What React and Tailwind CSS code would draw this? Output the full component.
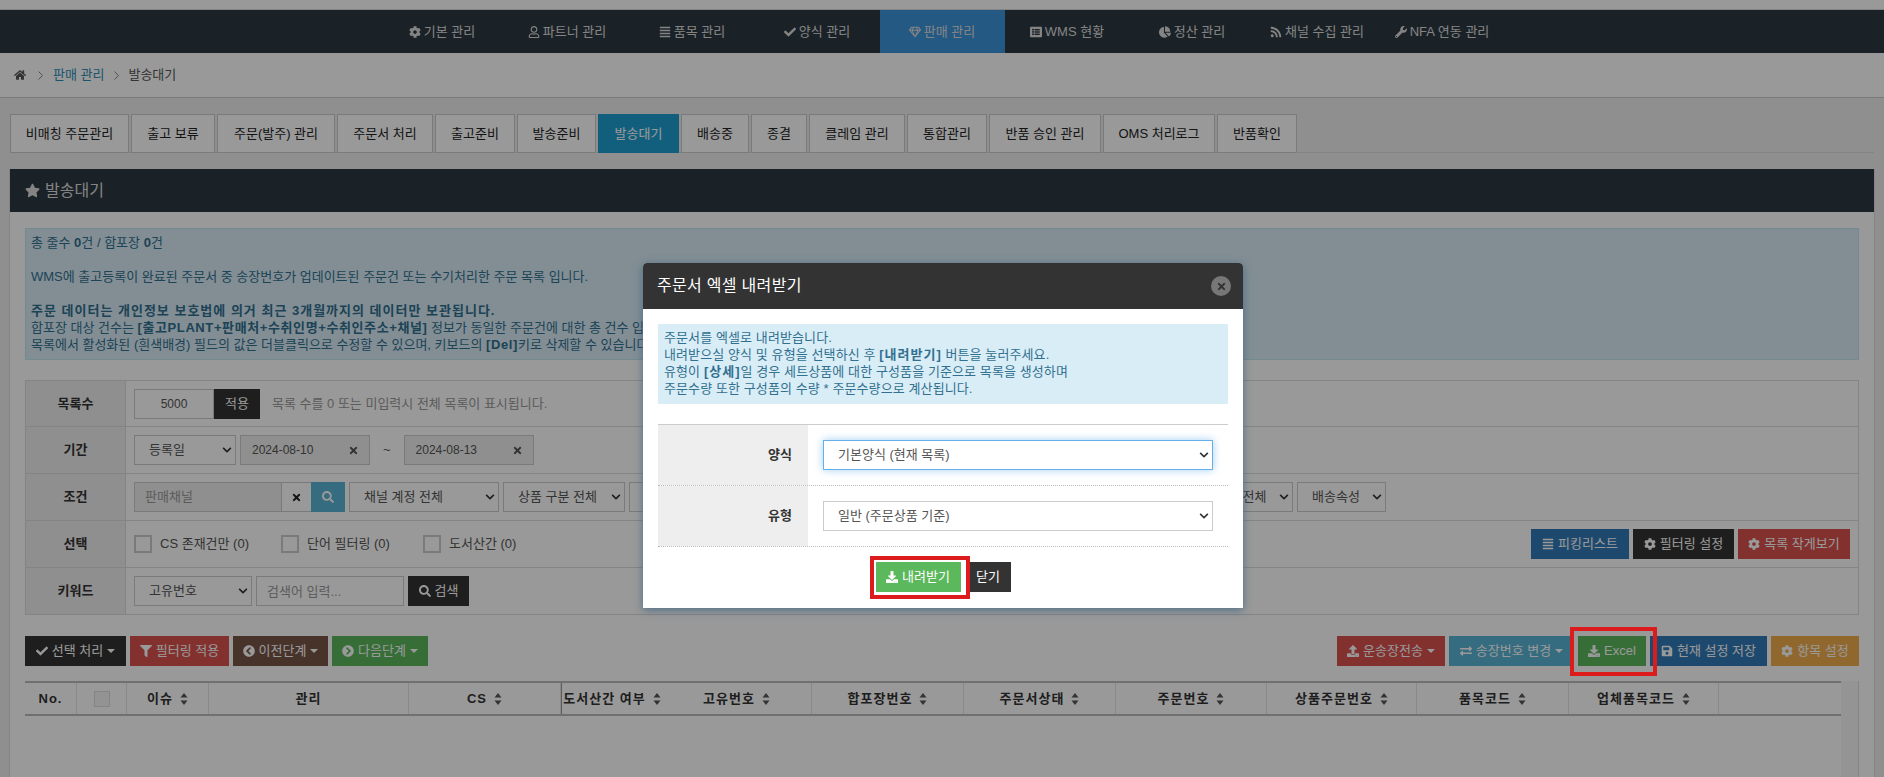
import React from 'react';
import {
  FaCog, FaRegUser, FaAlignJustify, FaCheck, FaRegGem, FaListAlt, FaChartPie, FaRss, FaWrench,
  FaHome, FaStar, FaTimes, FaSearch, FaDownload, FaUpload, FaExchangeAlt, FaSave,
  FaFilter, FaChevronCircleLeft, FaChevronCircleRight, FaChevronDown,
} from 'react-icons/fa';

const navItems = [
  { label: '기본 관리', icon: FaCog },
  { label: '파트너 관리', icon: FaRegUser },
  { label: '품목 관리', icon: FaAlignJustify },
  { label: '양식 관리', icon: FaCheck },
  { label: '판매 관리', icon: FaRegGem, active: true },
  { label: 'WMS 현황', icon: FaListAlt },
  { label: '정산 관리', icon: FaChartPie },
  { label: '채널 수집 관리', icon: FaRss },
  { label: 'NFA 연동 관리', icon: FaWrench },
];

const tabs = [
  { label: '비매칭 주문관리', w: 'w-[119px]' },
  { label: '출고 보류', w: 'w-[84px]' },
  { label: '주문(발주) 관리', w: 'w-[118px]' },
  { label: '주문서 처리', w: 'w-[96px]' },
  { label: '출고준비', w: 'w-[80px]' },
  { label: '발송준비', w: 'w-[79px]' },
  { label: '발송대기', w: 'w-[81px]', active: true },
  { label: '배송중', w: 'w-[68px]' },
  { label: '종결', w: 'w-[56px]' },
  { label: '클레임 관리', w: 'w-[96px]' },
  { label: '통합관리', w: 'w-[80px]' },
  { label: '반품 승인 관리', w: 'w-[112px]' },
  { label: 'OMS 처리로그', w: 'w-[112px]' },
  { label: '반품확인', w: 'w-[80px]' },
];

const columns = [
  { label: 'No.', w: 'w-[52px]' },
  { label: '', w: 'w-[50px]', check: true },
  { label: '이슈', w: 'w-[82px]', sort: true },
  { label: '관리', w: 'w-[200px]' },
  { label: 'CS', w: 'w-[152px]', sort: true },
  { label: '도서산간 여부', w: 'w-[101px]', sort: true, strong: true },
  { label: '고유번호', w: 'w-[150px]', sort: true },
  { label: '합포장번호', w: 'w-[152px]', sort: true },
  { label: '주문서상태', w: 'w-[152px]', sort: true },
  { label: '주문번호', w: 'w-[151px]', sort: true },
  { label: '상품주문번호', w: 'w-[150px]', sort: true },
  { label: '품목코드', w: 'w-[152px]', sort: true },
  { label: '업체품목코드', w: 'w-[150px]', sort: true },
];

const Caret = () => (
  <span className="inline-block h-0 w-0 border-x-[4px] border-t-[4px] border-x-transparent border-t-current" />
);

const SortArrows = () => (
  <svg width="8" height="14" viewBox="0 0 8 14" className="ml-[7px] shrink-0 text-[#555]">
    <path d="M4 1 L7.5 5.5 H0.5 Z" fill="currentColor" />
    <path d="M4 13 L7.5 8.5 H0.5 Z" fill="currentColor" />
  </svg>
);

const Crumb = ({ className = '' }) => (
  <svg width="5" height="9" viewBox="0 0 5 9" className={`shrink-0 text-[#888] ${className}`}>
    <path d="M0.5 0.5 L4.5 4.5 L0.5 8.5" fill="none" stroke="currentColor" />
  </svg>
);

const Select = ({ value, className = '', focused }) => (
  <div className={`relative h-[30px] ${className}`}>
    <select
      defaultValue={value}
      className={`h-full w-full appearance-none border bg-white pl-[14px] pr-6 text-[13px] text-[#555] outline-none ${
        focused ? 'border-[#66afe9] shadow-[0_0_8px_rgba(102,175,233,0.6)]' : 'border-[#ccc]'
      }`}
    >
      <option>{value}</option>
    </select>
    <FaChevronDown className="pointer-events-none absolute right-[4px] top-[10px] text-[#333]" size={10} />
  </div>
);

const DateInput = ({ value }) => (
  <div className="flex h-[30px] w-[130px] items-center justify-between border border-[#ccc] bg-[#eee] pl-[11px] pr-[10px] text-[12px] text-[#555]">
    <span>{value}</span>
    <FaTimes size={11} className="text-[#555]" />
  </div>
);

const Btn = ({ icon: Icon, label, color, w, caret }) => (
  <button className={`flex h-[30px] ${w} items-center justify-center gap-1 text-[13px] text-white ${color}`}>
    {Icon && <Icon size={12} className="shrink-0" />}
    <span>{label}</span>
    {caret && <Caret />}
  </button>
);

const CheckLabel = ({ label, className = '' }) => (
  <label className={`flex items-center gap-[8px] text-[13px] text-[#555] ${className}`}>
    <span className="h-[18px] w-[18px] border-2 border-[#ccc] bg-white" />
    {label}
  </label>
);

const FilterRow = ({ label, children, height = 'h-[47px]' }) => (
  <div className={`flex border-b border-[#ddd] ${height}`}>
    <div className="flex w-[100px] shrink-0 items-center justify-center border-r border-[#ddd] bg-[#eee] text-[13px] font-bold text-[#333]">
      {label}
    </div>
    <div className="flex min-w-0 flex-1 items-center gap-1 pl-[8px] pr-[8px]">{children}</div>
  </div>
);

const App = () => {
  return (
    <div className="relative h-[777px] w-[1884px] overflow-hidden bg-[#eee] font-['Liberation_Sans','Noto_Sans_CJK_KR',sans-serif] text-[13px]">
      <div className="h-[10px] border-b border-[#ddd] bg-white" />

      {/* Top navigation */}
      <nav className="flex h-[43px] justify-center bg-[#2d3a42] text-[#ddd]">
        {navItems.map((item) => {
          const Icon = item.icon;
          return (
            <a
              key={item.label}
              className={`flex w-[125px] items-center justify-center gap-[3px] whitespace-nowrap ${item.active ? 'bg-[#3c94dc]' : ''}`}
            >
              <Icon size={12} className="shrink-0" />
              {item.label}
            </a>
          );
        })}
      </nav>

      {/* Breadcrumb */}
      <div className="flex h-[45px] items-center border-b border-[#ccc] bg-white pl-[14px] text-[#555]">
        <FaHome size={12} />
        <Crumb className="ml-[12px]" />
        <a className="ml-[10px] text-[#2a8fb8]">판매 관리</a>
        <Crumb className="ml-[10px]" />
        <span className="ml-[9px]">발송대기</span>
      </div>

      {/* Tabs */}
      <div className="mx-[10px] mt-[16px] flex h-[39px] gap-[2px] border-b border-[#ddd]">
        {tabs.map((tab) => (
          <a
            key={tab.label}
            className={`flex h-[39px] shrink-0 items-center justify-center whitespace-nowrap border ${tab.w} ${
              tab.active ? 'border-[#1f9fd0] bg-[#1f9fd0] text-white' : 'border-[#ccc] bg-white text-[#222]'
            }`}
          >
            {tab.label}
          </a>
        ))}
      </div>

      {/* Panel */}
      <div className="mx-[9px] mt-[16px] h-[608px] border-x border-[#ddd] bg-white">
        <div className="flex h-[43px] items-center gap-[5px] bg-[#2d3a42] pl-[15px] text-[16px] text-[#ddd]">
          <FaStar size={15} />
          발송대기
        </div>

        <div className="px-[15px] pt-[16px]">
          <div className="h-[132px] overflow-hidden border border-[#bce8f1] bg-[#d9edf7] pl-[5px] pt-[5px] text-[13px] leading-[17px] text-[#31708f]">
            <p>총 줄수 <b>0</b>건 / 합포장 <b>0</b>건</p>
            <p>&nbsp;</p>
            <p>WMS에 출고등록이 완료된 주문서 중 송장번호가 업데이트된 주문건 또는 수기처리한 주문 목록 입니다.</p>
            <p>&nbsp;</p>
            <p><b className="tracking-[1px]">주문 데이터는 개인정보 보호법에 의거 최근 3개월까지의 데이터만 보관됩니다.</b></p>
            <p>합포장 대상 건수는 <b className="tracking-[0.6px]">[출고PLANT+판매처+수취인명+수취인주소+채널]</b> 정보가 동일한 주문건에 대한 총 건수 입니다.</p>
            <p>목록에서 활성화된 (흰색배경) 필드의 값은 더블클릭으로 수정할 수 있으며, 키보드의 <b className="tracking-[0.6px]">[Del]</b>키로 삭제할 수 있습니다.</p>
          </div>

          {/* Filters */}
          <div className="mt-[20px] border-x border-t border-[#ddd]">
            <FilterRow label="목록수" height="h-[46px]">
              <div className="flex">
                <input
                  defaultValue="5000"
                  className="h-[30px] w-[80px] border border-[#ccc] text-center text-[12px] text-[#555] outline-none"
                />
                <button className="h-[30px] w-[46px] bg-[#333] text-white">적용</button>
              </div>
              <span className="ml-[8px] text-[#999]">목록 수를 0 또는 미입력시 전체 목록이 표시됩니다.</span>
            </FilterRow>
            <FilterRow label="기간">
              <Select value="등록일" className="w-[102px]" />
              <DateInput value="2024-08-10" />
              <span className="mx-[9px] text-[#555]">~</span>
              <DateInput value="2024-08-13" />
            </FilterRow>
            <FilterRow label="조건">
              <div className="flex">
                <div className="flex h-[30px] w-[148px] items-center border border-[#ccc] bg-[#eee] pl-[10px] text-[#999]">판매채널</div>
                <div className="flex h-[30px] w-[29px] items-center justify-center border-y border-[#ccc] bg-white text-[#222]">
                  <FaTimes size={11} />
                </div>
                <button className="flex h-[30px] w-[34px] items-center justify-center bg-[#5bb4d6] text-white">
                  <FaSearch size={12} />
                </button>
              </div>
              <Select value="채널 계정 전체" className="w-[150px]" />
              <Select value="상품 구분 전체" className="w-[122px]" />
              <Select value="주문 구분 전체" className="w-[170px]" />
              <Select value="배송 구분 전체" className="w-[170px]" />
              <Select value="출고 구분 전체" className="w-[164px]" />
              <Select value="주문 상태 구분 전체" className="w-[148px]" />
              <Select value="배송속성" className="w-[89px]" />
            </FilterRow>
            <FilterRow label="선택">
              <CheckLabel label="CS 존재건만 (0)" className="w-[143px]" />
              <CheckLabel label="단어 필터링 (0)" className="w-[138px]" />
              <CheckLabel label="도서산간 (0)" />
              <div className="ml-auto flex gap-1">
                <Btn icon={FaAlignJustify} label="피킹리스트" color="bg-[#337ab7]" w="w-[98px]" />
                <Btn icon={FaCog} label="필터링 설정" color="bg-[#333]" w="w-[101px]" />
                <Btn icon={FaCog} label="목록 작게보기" color="bg-[#d9534f]" w="w-[112px]" />
              </div>
            </FilterRow>
            <FilterRow label="키워드">
              <Select value="고유번호" className="w-[118px]" />
              <input
                placeholder="검색어 입력..."
                className="h-[30px] w-[148px] border border-[#ccc] pl-[10px] text-[13px] outline-none placeholder:text-[#999]"
              />
              <Btn icon={FaSearch} label="검색" color="bg-[#333]" w="w-[61px]" />
            </FilterRow>
          </div>

          {/* Action buttons */}
          <div className="mt-[21px] flex justify-between">
            <div className="flex gap-1">
              <Btn icon={FaCheck} label="선택 처리" color="bg-[#333]" w="w-[101px]" caret />
              <Btn icon={FaFilter} label="필터링 적용" color="bg-[#d9534f]" w="w-[99px]" />
              <Btn icon={FaChevronCircleLeft} label="이전단계" color="bg-[#795548]" w="w-[95px]" caret />
              <Btn icon={FaChevronCircleRight} label="다음단계" color="bg-[#5cb85c]" w="w-[96px]" caret />
            </div>
            <div className="flex gap-1">
              <Btn icon={FaUpload} label="운송장전송" color="bg-[#d9534f]" w="w-[108px]" caret />
              <Btn icon={FaExchangeAlt} label="송장번호 변경" color="bg-[#5bb4d6]" w="w-[125px]" caret />
              <Btn icon={FaDownload} label="Excel" color="bg-[#5cb85c]" w="w-[68px]" />
              <Btn icon={FaSave} label="현재 설정 저장" color="bg-[#337ab7]" w="w-[117px]" />
              <Btn icon={FaCog} label="항목 설정" color="bg-[#f0ad4e]" w="w-[88px]" />
            </div>
          </div>

          {/* Grid header */}
          <div className="mt-[15px] flex border-r border-[#ddd]">
            <div className="flex h-[35px] flex-1 border-y-2 border-[#bbb]">
              {columns.map((col) => (
                <div
                  key={col.label || 'check'}
                  className={`flex shrink-0 items-center justify-center whitespace-nowrap text-[13px] font-bold tracking-[1px] text-[#333] ${col.w} ${
                    col.strong ? 'border-l border-[#999]' : 'border-r border-[#e5e5e5]'
                  }`}
                >
                  {col.check && <span className="h-[16px] w-[16px] border border-[#ddd] bg-[#f5f5f5]" />}
                  {col.label}
                  {col.sort && <SortArrows />}
                </div>
              ))}
            </div>
            <div className="h-[96px] w-[17px] bg-[#f7f7f7]" />
          </div>
        </div>
      </div>

      {/* Modal backdrop */}
      <div className="absolute inset-0 bg-black/40" />

      {/* Annotation around the Excel button */}
      <div className="absolute left-[1570px] top-[627px] h-[49px] w-[87px] border-[4px] border-[#dc1c1c]" />

      {/* Download dialog */}
      <div className="absolute left-[643px] top-[263px] h-[345px] w-[600px] overflow-hidden rounded-t-[4px] bg-white shadow-[0_2px_8px_rgba(60,100,130,0.8)]">
        <div className="flex h-[46px] items-center justify-between bg-[#333] pl-[14px] pr-[12px] text-[16px] tracking-[0.3px] text-white">
          주문서 엑셀 내려받기
          <span className="flex h-[20px] w-[20px] items-center justify-center rounded-full bg-[#777] text-[#333]">
            <FaTimes size={11} />
          </span>
        </div>
        <div className="px-[15px] pt-[15px]">
          <div className="h-[80px] bg-[#d9edf7] pl-[6px] pt-[5px] text-[13px] leading-[17px] tracking-[0.1px] text-[#31708f]">
            <p>주문서를 엑셀로 내려받습니다.</p>
            <p>내려받으실 양식 및 유형을 선택하신 후 <b className="tracking-[1px]">[내려받기]</b> 버튼을 눌러주세요.</p>
            <p>유형이 <b className="tracking-[1px]">[상세]</b>일 경우 세트상품에 대한 구성품을 기준으로 목록을 생성하며</p>
            <p>주문수량 또한 구성품의 수량 * 주문수량으로 계산됩니다.</p>
          </div>
          <div className="mt-[20px] border-t border-[#ccc]">
            <div className="flex h-[61px] border-b border-dotted border-[#bbb]">
              <div className="flex w-[150px] items-center justify-end bg-[#eee] pr-[16px] font-bold text-[#333]">양식</div>
              <div className="flex flex-1 items-center px-[15px]">
                <Select value="기본양식 (현재 목록)" className="w-full" focused />
              </div>
            </div>
            <div className="flex h-[61px] border-b border-dotted border-[#bbb]">
              <div className="flex w-[150px] items-center justify-end bg-[#eee] pr-[16px] font-bold text-[#333]">유형</div>
              <div className="flex flex-1 items-center px-[15px]">
                <Select value="일반 (주문상품 기준)" className="w-full" />
              </div>
            </div>
          </div>
          <div className="mt-[15px] flex justify-center gap-[5px]">
            <div className="relative z-10">
              <Btn icon={FaDownload} label="내려받기" color="bg-[#5cb85c]" w="w-[85px]" />
              <div className="absolute -bottom-[7px] -left-[6px] -right-[9px] -top-[6px] border-[4px] border-[#dc1c1c]" />
            </div>
            <button className="h-[30px] w-[45px] bg-[#333] text-white">닫기</button>
          </div>
        </div>
      </div>
    </div>
  );
};

export default App;
